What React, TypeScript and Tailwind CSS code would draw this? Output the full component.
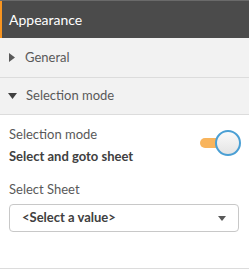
export default function App() {
  return (
    <div className="w-[249px] h-[270px] bg-white font-['Lato',sans-serif] overflow-hidden">
      <div className="h-[1px] bg-[#6a6a6a]" />
      <div className="h-[37px] bg-[#4b4b4b] border-l-2 border-[#f79420] flex items-center pl-[7px]">
        <span className="text-[14px] text-white">Appearance</span>
      </div>
      <div className="h-[40px] bg-[#f2f2f2] border-b border-[#dcdcdc] flex items-center pl-[9px]">
        <svg width="6" height="9" viewBox="0 0 6 9" className="mr-[10px]">
          <path d="M0 0 L6 4.5 L0 9 Z" fill="#595959" />
        </svg>
        <span className="text-[13px] text-[#595959]">General</span>
      </div>
      <div className="h-[37px] bg-[#f2f2f2] border-b border-[#dcdcdc] flex items-center pl-[8px]">
        <svg width="9" height="6" viewBox="0 0 9 6" className="mr-[9px]">
          <path d="M0 0 L9 0 L4.5 6 Z" fill="#404040" />
        </svg>
        <span className="text-[13px] text-[#595959]">Selection mode</span>
      </div>
      <div className="px-[9px] pt-[9px] h-[154px] border-b border-[#dcdcdc]">
        <div className="flex items-start justify-between">
          <div className="flex flex-col">
            <span className="text-[13px] text-[#595959] leading-[20px]">Selection mode</span>
            <span className="text-[13px] font-bold text-[#404040] leading-[20px] mt-[2px]">Select and goto sheet</span>
          </div>
          <div className="relative w-[41px] h-[26px] mt-[6px] mr-[-1px]">
            <div className="absolute left-0 top-[8px] w-[26px] h-[10px] rounded-full bg-[#f8b45c]" />
            <div className="absolute right-0 top-0 w-[26px] h-[26px] rounded-full border-2 border-[#4a9fd4] bg-[linear-gradient(#fafafa,#e4e4e4)]" />
          </div>
        </div>
        <div className="mt-[13px] text-[13px] text-[#595959] leading-[20px]">Select Sheet</div>
        <div className="mt-[5px] h-[28px] w-[230px] rounded-[4px] border border-[#c8c8c8] bg-white flex items-center justify-between pl-[12px] pr-[12px]">
          <span className="text-[13px] font-bold text-[#404040]">&lt;Select a value&gt;</span>
          <svg width="8" height="5" viewBox="0 0 8 5">
            <path d="M0 0 L8 0 L4 5 Z" fill="#595959" />
          </svg>
        </div>
      </div>
    </div>
  );
}
